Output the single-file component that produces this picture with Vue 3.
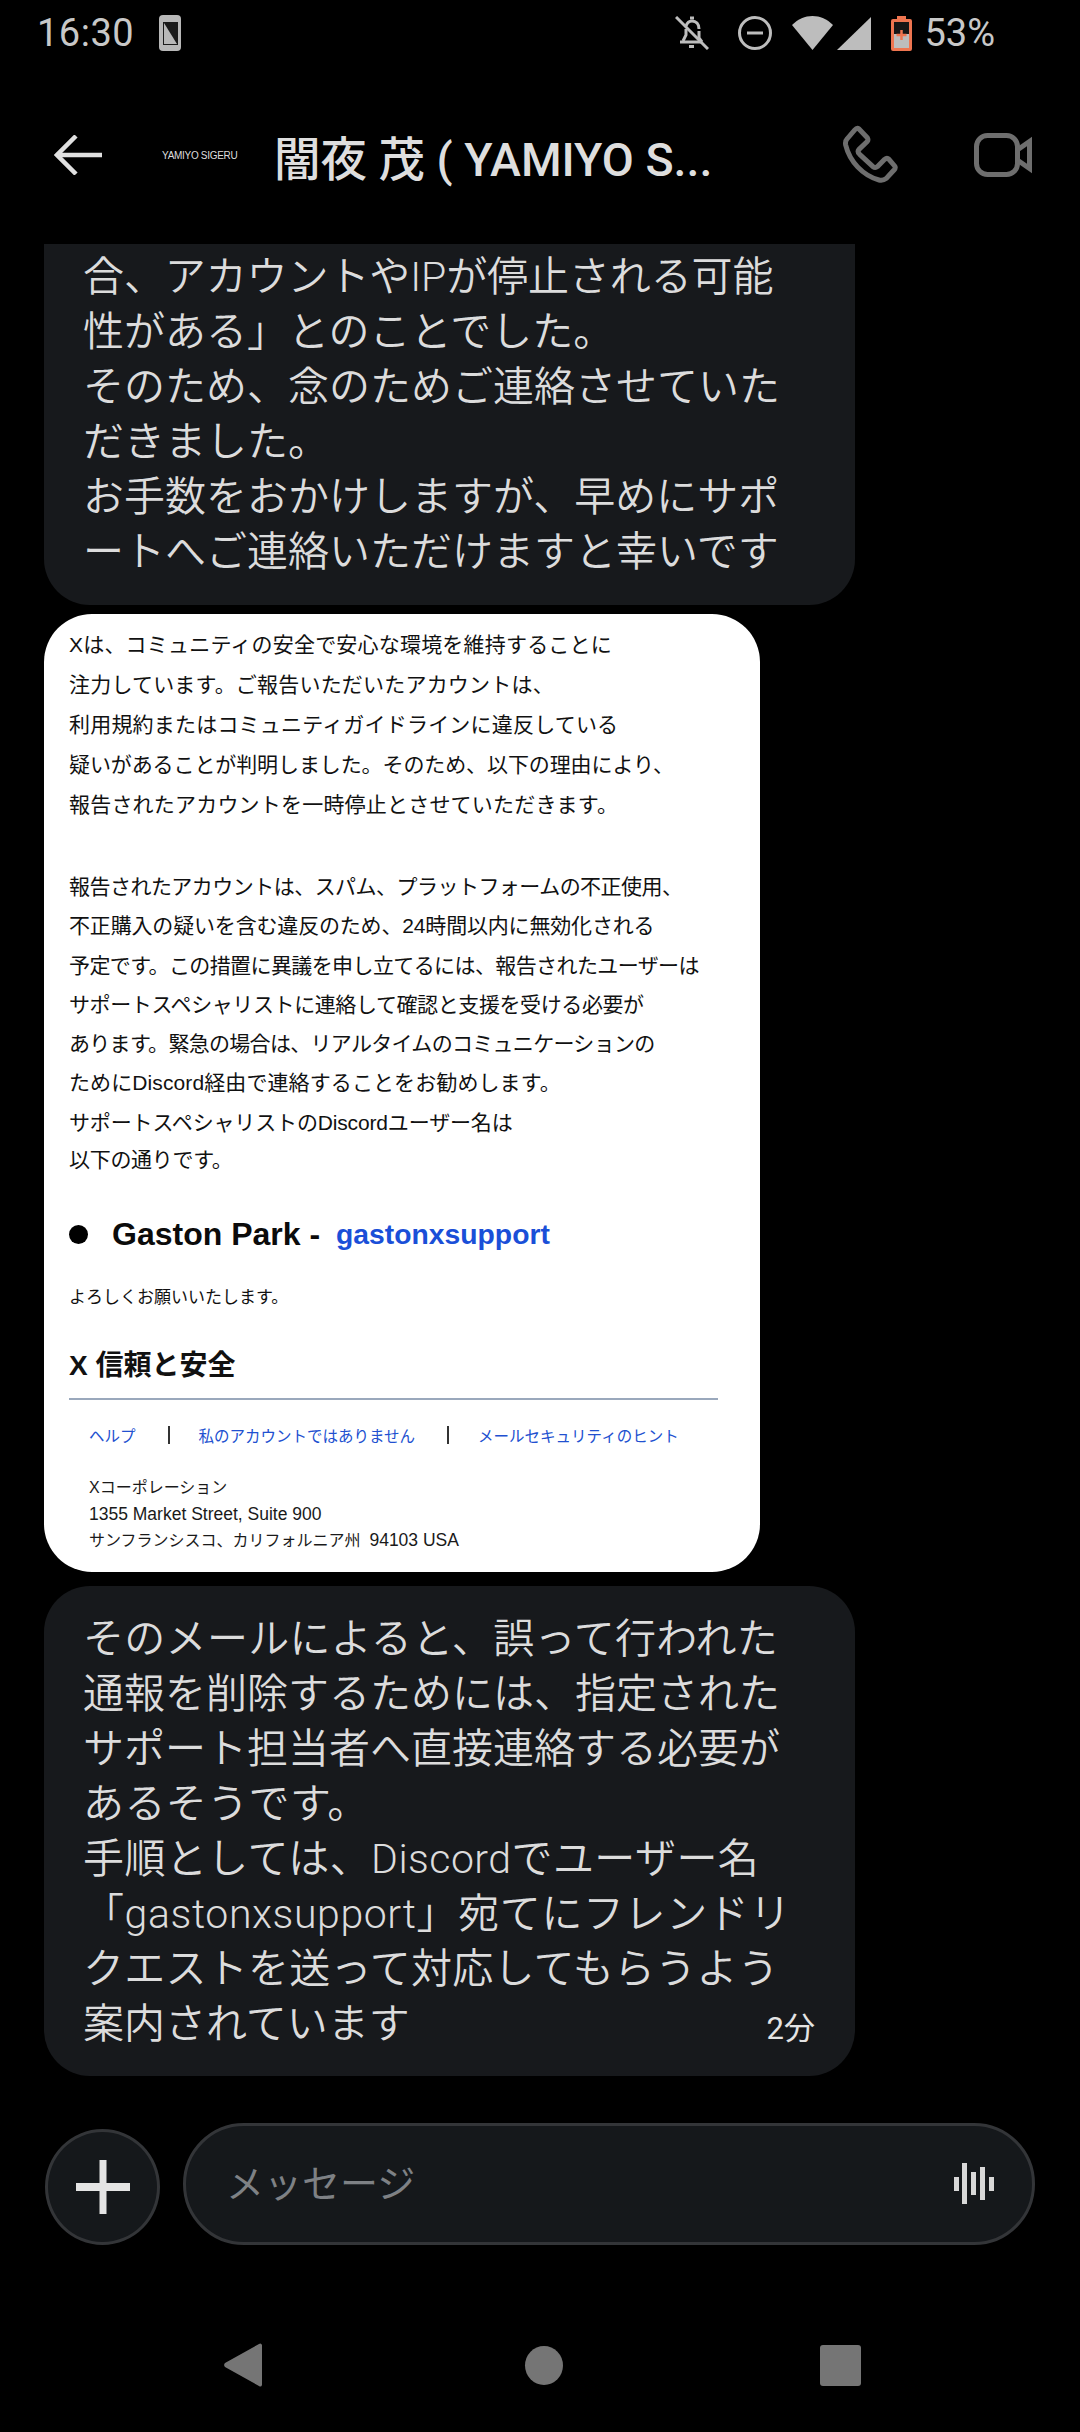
<script setup>
const first = [
  { t: '合、アカウントやIPが停止される可能', s: -0.1 },
  { t: '性がある」とのことでした。', s: 0 },
  { t: 'そのため、念のためご連絡させていた', s: 0 },
  { t: 'だきました。', s: 0 },
  { t: 'お手数をおかけしますが、早めにサポ', s: 0 },
  { t: 'ートへご連絡いただけますと幸いです', s: 0 }
]
const last = [
  { t: 'そのメールによると、誤って行われた', s: 0.3 },
  { t: '通報を削除するためには、指定された', s: 0 },
  { t: 'サポート担当者へ直接連絡する必要が', s: 0 },
  { t: 'あるそうです。', s: 0.4 },
  { t: '手順としては、Discordでユーザー名', s: 0.45 },
  { t: '「gastonxsupport」宛てにフレンドリ', s: 0.6 },
  { t: 'クエストを送って対応してもらうよう', s: 0.25 },
  { t: '案内されています', s: 0 }
]
const group1 = [
  { t: 'Xは、コミュニティの安全で安心な環境を維持することに', s: 0.2 },
  { t: '注力しています。ご報告いただいたアカウントは、', s: 0.2 },
  { t: '利用規約またはコミュニティガイドラインに違反している', s: 0.2 },
  { t: '疑いがあることが判明しました。そのため、以下の理由により、', s: -0.1 },
  { t: '報告されたアカウントを一時停止とさせていただきます。', s: 0.2 }
]
const group2 = [
  { t: '報告されたアカウントは、スパム、プラットフォームの不正使用、', s: -0.53 },
  { t: '不正購入の疑いを含む違反のため、24時間以内に無効化される', s: -0.17 },
  { t: '予定です。この措置に異議を申し立てるには、報告されたユーザーは', s: -0.6 },
  { t: 'サポートスペシャリストに連絡して確認と支援を受ける必要が', s: -0.4 },
  { t: 'あります。緊急の場合は、リアルタイムのコミュニケーションの', s: -0.7 },
  { t: 'ためにDiscord経由で連絡することをお勧めします。', s: 0.1 },
  { t: 'サポートスペシャリストのDiscordユーザー名は', s: -0.15 }
]
</script>

<template>
  <div class="screen">
    <div class="status">
      <span class="clock">16:30</span>
      <svg class="ic-device" width="22" height="36" viewBox="0 0 22 36"><rect width="22" height="36" rx="4" fill="#b8b8b8"/><rect x="4" y="7" width="15" height="23" fill="#1a1a1a"/><path d="M5 8v21h13z" fill="#b8b8b8"/></svg>
      <span class="grow"></span>
      <svg width="34" height="34" viewBox="0 0 34 34" fill="none" stroke="#bdbdbd" stroke-width="3"><path d="M5 26h22"/><path d="M8 25l3-6v-6M24 15v7l3 4"/><path d="M11 10c1-3 3-5 6-5 4 0 7 3 7 8"/><path d="M15 2h4" stroke-width="3"/><path d="M14 30.500h5" stroke-width="3"/><path d="M1 1l32 32" stroke-width="3"/></svg>
      <svg class="ml-dnd" width="34" height="34" viewBox="0 0 34 34" fill="none" stroke="#bdbdbd"><circle cx="17" cy="17" r="15.500" stroke-width="3"/><path d="M9 17h16" stroke-width="3"/></svg>
      <svg class="ml-wifi" width="41" height="34" viewBox="0 0 41 34"><path d="M20.500 34 L0 9 C6 3 13 0 20.500 0 C28 0 35 3 41 9z" fill="#bdbdbd"/></svg>
      <svg class="ml-sig" width="34" height="33" viewBox="0 0 34 33"><path d="M34 0v33H0z" fill="#bdbdbd"/></svg>
      <svg class="ml-bat" width="21" height="35" viewBox="0 0 21 35"><path d="M6 0h9v3h4a2 2 0 0 1 2 2v28a2 2 0 0 1-2 2H2a2 2 0 0 1-2-2V5a2 2 0 0 1 2-2h4z" fill="#ee7550"/><rect x="3" y="6" width="15" height="26" fill="#161616"/><rect x="3" y="18" width="15" height="14" fill="#bdbdbd"/><path d="M10.500 14v10M5.500 19h10" stroke="#ee7550" stroke-width="2.500"/></svg>
      <span class="pct">53%</span>
    </div>

    <div class="header">
      <svg class="back" width="48" height="40" viewBox="0 0 48 40" fill="none" stroke="#e0e0e0" stroke-width="4.500"><path d="M48 20H3"/><path d="M22 1L3 20l19 19"/></svg>
      <span class="logo">YAMIYO SIGERU</span>
      <span class="title">闇夜 茂 ( YAMIYO S...</span>
      <span class="grow"></span>
      <svg width="58" height="60" viewBox="37 30 174 180" fill="none" stroke="#6e6e6e" stroke-width="15" stroke-linejoin="round"><path d="M88 42L113 68Q117 75 112 80L88 103Q82 110 90 118L130 155Q137 160 143 155L165 133Q172 127 178 133L195 153Q199 158 193 165L170 190Q160 198 148 195C100 182 60 140 48 90Q46 78 52 72L75 45Q82 37 88 42Z"/></svg>
      <svg class="video" width="58" height="44" viewBox="0 0 58 44" fill="none" stroke="#6e6e6e" stroke-width="5"><rect x="2.500" y="2.500" width="41" height="39" rx="11"/><path d="M44 16.500L55.500 8.500V35.500L44 27.500"/></svg>
    </div>

    <div class="chat">
      <div class="bubble clipped">
        <div v-for="l in first" :key="l.t" class="line" :style="{ letterSpacing: l.s + 'px' }">{{ l.t }}</div>
      </div>

      <div class="card">
        <div v-for="l in group1" :key="l.t" class="c1" :style="{ letterSpacing: l.s + 'px' }">{{ l.t }}</div>
        <div class="blank"></div>
        <div v-for="l in group2" :key="l.t" class="c2" :style="{ letterSpacing: l.s + 'px' }">{{ l.t }}</div>
        <div class="c3">以下の通りです。</div>
        <div class="gaston">
          <span class="dot"></span>
          <span class="gname">Gaston Park -</span>
          <span class="ghandle">gastonxsupport</span>
        </div>
        <div class="regards">よろしくお願いいたします。</div>
        <div class="trust">X 信頼と安全</div>
        <div class="rule"></div>
        <div class="links">
          <span class="lnk">ヘルプ</span>
          <span class="sep"></span>
          <span class="lnk">私のアカウントではありません</span>
          <span class="sep"></span>
          <span class="lnk">メールセキュリティのヒント</span>
        </div>
        <div class="addr">
          <div>Xコーポレーション</div>
          <div class="latin">1355 Market Street, Suite 900</div>
          <div>サンフランシスコ、カリフォルニア州&nbsp; <span class="latin">94103 USA</span></div>
        </div>
      </div>

      <div class="bubble lastb">
        <div v-for="l in last" :key="l.t" class="line" :style="{ letterSpacing: l.s + 'px' }">{{ l.t }}</div>
        <span class="time">2分</span>
      </div>
    </div>

    <div class="composer">
      <div class="plus">
        <svg width="54" height="54" viewBox="0 0 54 54" fill="#e4e4e4"><rect x="23.500" y="0" width="7" height="54"/><rect x="0" y="23" width="54" height="8"/></svg>
      </div>
      <div class="field">
        <span class="ph">メッセージ</span>
        <svg width="40" height="42" viewBox="0 0 40 42" fill="#d8d8d8"><rect x="0" y="14" width="5" height="14"/><rect x="8" y="0" width="5" height="41"/><rect x="17" y="9" width="5" height="23"/><rect x="26" y="4" width="5" height="33"/><rect x="35" y="14" width="5" height="14"/></svg>
      </div>
    </div>

    <div class="nav">
      <svg width="38" height="44" viewBox="0 0 38 44"><path d="M38 2v40a2 2 0 0 1-3 1L1 24a3 3 0 0 1 0-4L35 1a2 2 0 0 1 3 1z" fill="#757575"/></svg>
      <span class="home"></span>
      <span class="recent"></span>
    </div>
  </div>
</template>

<style scoped>
.screen {
  width: 1080px;
  height: 2432px;
  background: #000;
  display: flex;
  flex-direction: column;
  overflow: hidden;
  font-family: Roboto, "Noto Sans CJK JP", sans-serif;
  color: #e2e2e2;
}
.grow { flex: 1; }
.status {
  height: 66px;
  flex: none;
  box-sizing: border-box;
  display: flex;
  align-items: center;
  padding: 0 85px 0 37px;
  color: #c8c8c8;
}
.clock { font-size: 38px; letter-spacing: 0.5px; }
.ic-device { margin-left: 25px; }
.ml-dnd { margin-left: 29px; }
.ml-wifi { margin-left: 20px; }
.ml-sig { margin-left: 4px; }
.ml-bat { margin-left: 20px; }
.pct { font-size: 38px; margin-left: 12px; }
.header {
  height: 178px;
  flex: none;
  box-sizing: border-box;
  display: flex;
  align-items: center;
  padding: 0 48px 0 54px;
}
.logo {
  font-family: "Liberation Sans", sans-serif;
  font-size: 10px;
  letter-spacing: -0.3px;
  color: #ddd;
  margin-left: 60px;
  white-space: nowrap;
  width: 112px;
}
.title { font-size: 46.500px; font-weight: 500; color: #dedede; white-space: nowrap; }
.video { margin-left: 74px; }
.chat {
  height: 1879px;
  flex: none;
  overflow: hidden;
  padding-left: 44px;
  box-sizing: border-box;
  display: flex;
  flex-direction: column;
  align-items: flex-start;
}
.bubble {
  width: 811px;
  background: #17191c;
  border-radius: 46px;
  padding: 26px 40px 23px 39px;
  box-sizing: border-box;
  position: relative;
  flex: none;
}
.clipped { border-top-left-radius: 0; border-top-right-radius: 0; padding-top: 6px; height: 361px; }
.line { font-size: 41px; line-height: 55px; height: 55px; white-space: nowrap; font-weight: 350; color: #dcdcdc; }
.card {
  width: 716px;
  height: 958px;
  box-sizing: border-box;
  margin-top: 9px;
  background: #fff;
  border-radius: 48px;
  padding: 11px 0 0 25px;
  color: #111;
  font-family: "Liberation Sans", "Noto Sans CJK JP", sans-serif;
  flex: none;
}
.c1, .c2, .c3 { font-size: 21px; white-space: nowrap; }
.c1 { height: 40px; line-height: 40px; }
.blank { height: 42px; }
.c2 { height: 39.300px; line-height: 39.300px; }
.c3 { height: 35px; line-height: 35px; letter-spacing: -0.3px; }
.gaston { height: 44px; margin-top: 35px; display: flex; align-items: center; font-weight: 700; white-space: nowrap; }
.dot { width: 19px; height: 19px; border-radius: 50%; background: #000; margin-right: 24px; }
.gname { color: #0b0b0b; font-size: 32px; }
.ghandle { color: #1a4fd8; margin-left: 16px; font-size: 28.300px; }
.regards { height: 30px; line-height: 30px; margin-top: 27px; font-size: 17px; }
.trust { height: 40px; line-height: 40px; margin-top: 33px; font-size: 28px; font-weight: 700; white-space: nowrap; }
.rule { width: 649px; height: 2px; background: #9aa8bc; margin-top: 12px; }
.links { height: 30px; margin-top: 20px; padding-left: 20px; display: flex; align-items: center; font-size: 15.500px; color: #2150d0; white-space: nowrap; }
.sep { width: 2px; height: 18px; background: #333; margin: 0 29px 0 32px; }
.addr { margin-top: 25px; padding-left: 20px; font-size: 16px; line-height: 26px; white-space: nowrap; color: #1a1a1a; }
.latin { font-size: 17.500px; }
.lastb { margin-top: 14px; height: 490px; }
.time { position: absolute; right: 40px; bottom: 28px; font-size: 31px; color: #e4e4e4; }
.composer {
  height: 122px;
  flex: none;
  padding-left: 45px;
  display: flex;
  align-items: flex-end;
}
.plus {
  width: 115px;
  height: 116px;
  border-radius: 50%;
  box-sizing: border-box;
  border: 3px solid #333538;
  background: #15181b;
  display: flex;
  align-items: center;
  justify-content: center;
}
.field {
  width: 852px;
  height: 122px;
  margin-left: 23px;
  box-sizing: border-box;
  border: 3px solid #333538;
  border-radius: 61px;
  background: #15181b;
  display: flex;
  align-items: center;
  padding: 0 38px 0 40px;
}
.ph { flex: 1; font-size: 38px; color: #7e8185; padding-bottom: 8px; }
.nav {
  flex: 1;
  box-sizing: border-box;
  display: flex;
  align-items: center;
  padding: 53px 219px 0 224px;
  justify-content: space-between;
}
.home { width: 38px; height: 39px; border-radius: 50%; background: #757575; margin-left: 6px; }
.recent { width: 41px; height: 41px; border-radius: 3px; background: #757575; }
</style>
